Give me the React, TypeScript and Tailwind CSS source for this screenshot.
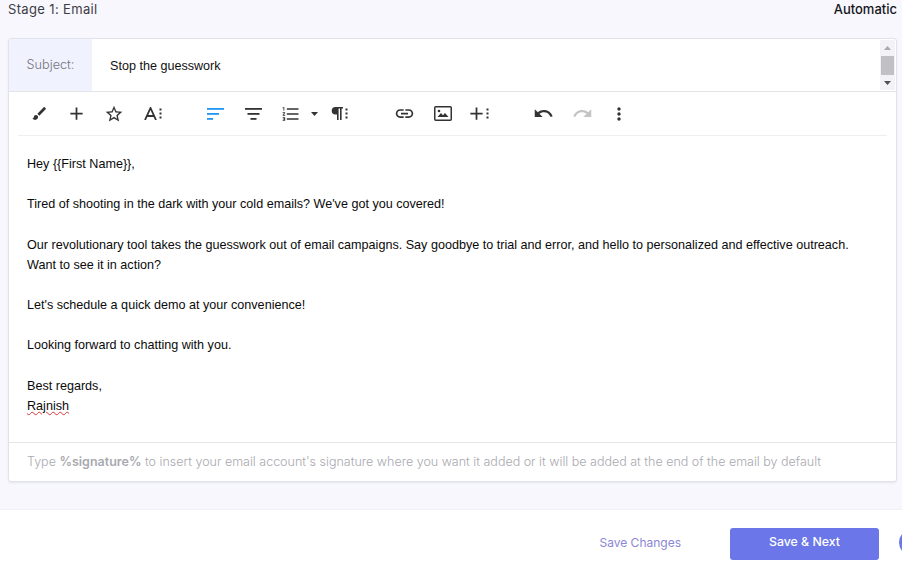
import { MdAdd, MdBrush, MdFormatListNumbered, MdLink, MdMoreVert, MdRedo, MdStarBorder, MdUndo } from "react-icons/md";

const body = "font-['Liberation_Sans',Arial,sans-serif]";

function Dots({ className = "" }: { className?: string }) {
  return (
    <svg width="3" height="11" viewBox="0 0 3 11" className={className}>
      <rect x="0.5" y="0.5" width="2" height="2" fill="currentColor" />
      <rect x="0.5" y="4.5" width="2" height="2" fill="currentColor" />
      <rect x="0.5" y="8.5" width="2" height="2" fill="currentColor" />
    </svg>
  );
}

function AlignIcon({ center, color }: { center?: boolean; color: string }) {
  return (
    <svg width="17" height="12" viewBox="0 0 17 12" fill={color}>
      <rect x="0" y="0" width="17" height="1.8" />
      <rect x={center ? 2.5 : 0} y="5" width="12" height="1.8" />
      <rect x={center ? 5.5 : 0} y="10" width="6" height="1.8" />
    </svg>
  );
}

function FontSizeIcon() {
  return (
    <svg width="13" height="13" viewBox="0 0 13 13" fill="none" stroke="#333" strokeWidth="1.8">
      <path d="M1 13 6.5 1 12 13M3 9h7" />
    </svg>
  );
}

function ParagraphIcon() {
  return (
    <svg width="12" height="13" viewBox="0 0 12 13" fill="#333">
      <path d="M4.5 0H12v1.6h-1.4V13H9V1.6H7.6V13H6V7.6H4.5a3.8 3.8 0 0 1 0-7.6z" />
    </svg>
  );
}

function ImageIcon() {
  return (
    <svg width="18" height="15" viewBox="0 0 18 15" fill="none">
      <rect x="0.75" y="0.75" width="16.5" height="13.5" rx="1" stroke="#333" strokeWidth="1.5" />
      <circle cx="5" cy="5" r="1.3" fill="#333" />
      <path d="M3.5 11 7 7l2 2.2L11 7l3.5 4z" fill="#333" />
    </svg>
  );
}

function Toolbar() {
  return (
    <div className="mx-[9px] flex h-[44px] items-center border-b border-[#eeeeef] text-[#333]">
      <div className="ml-[10px] flex w-[22px] justify-center">
        <MdBrush size={17} />
      </div>
      <div className="ml-[15px] flex w-[22px] justify-center">
        <MdAdd size={21} />
      </div>
      <div className="ml-[16px] flex w-[22px] justify-center">
        <MdStarBorder size={20} />
      </div>
      <div className="ml-[19px] flex w-[19px] items-center gap-[2px]">
        <FontSizeIcon />
        <Dots />
      </div>
      <div className="ml-[44px] flex w-[17px] justify-center">
        <AlignIcon color="#2196f3" />
      </div>
      <div className="ml-[21px] flex w-[17px] justify-center">
        <AlignIcon center color="#333" />
      </div>
      <div className="ml-[19px] flex items-center">
        <MdFormatListNumbered size={20} />
        <svg width="7" height="4" viewBox="0 0 7 4" className="ml-[10px]" fill="#333">
          <path d="M0 0h7L3.5 4z" />
        </svg>
      </div>
      <div className="ml-[13px] flex items-center gap-[2px]">
        <ParagraphIcon />
        <Dots />
      </div>
      <div className="ml-[46px]">
        <MdLink size={21} />
      </div>
      <div className="ml-[19px]">
        <ImageIcon />
      </div>
      <div className="ml-[17px] flex items-center">
        <MdAdd size={21} className="-ml-[3px]" />
        <Dots className="ml-[-1px]" />
      </div>
      <div className="ml-[44px]">
        <MdUndo size={21} />
      </div>
      <div className="ml-[18px] text-[#c4c4c4]">
        <MdRedo size={21} />
      </div>
      <div className="ml-[16px]">
        <MdMoreVert size={20} />
      </div>
    </div>
  );
}

function Scrollbar() {
  return (
    <div className="mt-[1px] flex h-[50px] w-[15px] flex-col items-center bg-[#f3f3f7]">
      <svg width="7" height="4" viewBox="0 0 7 4" className="mt-[6px]" fill="#a9a9ad">
        <path d="M3.5 0 7 4H0z" />
      </svg>
      <div className="mt-[6px] h-[19px] w-[13px] bg-[#c1c1c5]" />
      <svg width="7" height="4" viewBox="0 0 7 4" className="mt-[6px]" fill="#505054">
        <path d="M0 0h7L3.5 4z" />
      </svg>
    </div>
  );
}

export default function App() {
  return (
    <div className="relative flex h-[569px] w-[902px] flex-col overflow-hidden bg-white font-['Inter',sans-serif]">
      <main className="flex-1 bg-[#f7f7fd] pl-2">
        <header className="flex h-[38px] items-start justify-between pr-[5px]">
          <span className="text-[13px] leading-[19px] tracking-[0.35px] text-[#3c3c44]">Stage 1: Email</span>
          <span className="text-[13px] font-medium leading-[18px] text-[#16161c]">Automatic</span>
        </header>

        <section className="w-[889px] rounded-[3px] border border-[#e2e2ea] bg-white shadow-[0_1px_2px_rgba(30,30,60,0.08)]">
          <div className="flex h-[53px] border-b border-[#e4e4e8]">
            <div className="flex w-[83px] items-center justify-center bg-[#f0f2fd] pb-[1px] text-[12.7px] font-light text-[#74747e]">
              Subject:
            </div>
            <div className={`flex flex-1 items-center pt-[3px] pl-[18px] text-[12.6px] text-[#111] ${body}`}>Stop the guesswork</div>
            <Scrollbar />
            <div className="w-px" />
          </div>

          <Toolbar />

          <div className={`h-[306px] px-[18px] pt-[18px] text-[12.6px] leading-[20.15px] text-[#0a0a0a] ${body}`}>
            <p>Hey {"{{First Name}}"},</p>
            <br />
            <p>Tired of shooting in the dark with your cold emails? We've got you covered!</p>
            <br />
            <p>
              Our revolutionary tool takes the guesswork out of email campaigns. Say goodbye to trial and error, and hello to personalized and effective outreach.
              <br />
              Want to see it in action?
            </p>
            <br />
            <p>Let's schedule a quick demo at your convenience!</p>
            <br />
            <p>Looking forward to chatting with you.</p>
            <br />
            <p>Best regards,</p>
            <p>
              <span className="underline decoration-[#d33] decoration-wavy decoration-[1px] underline-offset-[1px]">Rajnish</span>
            </p>
          </div>

          <div className="flex h-[39px] items-center border-t border-[#e6e6ea] px-[18px] text-[12.5px] font-light text-[#a9a9b0]">
            <span>
              Type <b className="font-semibold">%signature%</b> to insert your email account's signature where you want it added or it will be added at the end of the email by default
            </span>
          </div>
        </section>
      </main>

      <footer className="flex h-[60px] items-start justify-end border-t border-[#f0f0f5] bg-white pt-[18px] pr-[23px]">
        <button className="mr-[49px] h-[32px] pb-[3px] text-[12px] text-[#8a87d6]">Save Changes</button>
        <button className="h-[32px] w-[149px] rounded-[3px] bg-[#6b77e8] pb-[3px] text-[12.3px] font-medium text-white">Save &amp; Next</button>
      </footer>

      <div className="absolute left-[899px] top-[529px] h-[27px] w-[27px] rounded-full bg-[#6b77e8]" />
    </div>
  );
}
